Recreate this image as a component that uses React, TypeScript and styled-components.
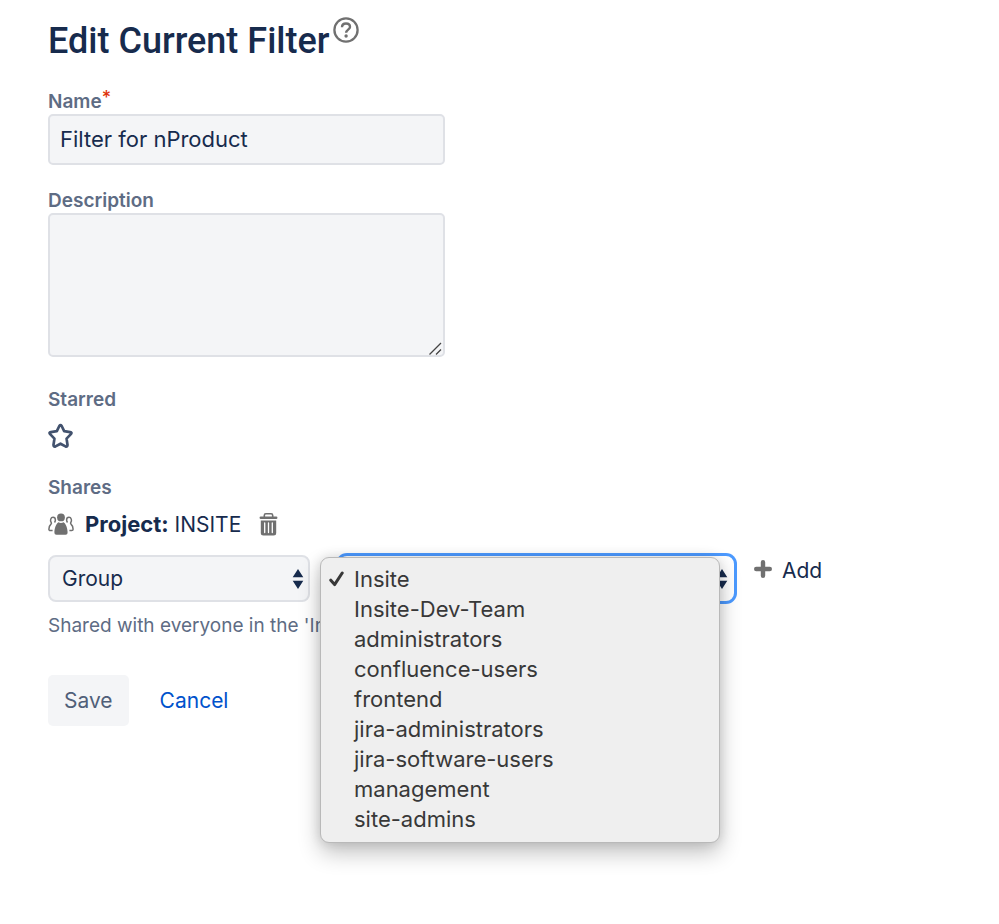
import React, { useState } from "react";
import styled, { createGlobalStyle } from "styled-components";

const GlobalStyle = createGlobalStyle`
  *, *::before, *::after { box-sizing: border-box; }
  body {
    margin: 0;
    background: #ffffff;
    color: #172b4d;
    font-family: Inter, "Liberation Sans", sans-serif;
    font-size: 21px;
    line-height: 30px;
  }
  button, input, select, textarea { font: inherit; color: inherit; margin: 0; }
`;

const Page = styled.main`
  min-height: 100vh;
  padding: 17px 48px 48px;
`;

const Header = styled.header`
  display: flex;
  align-items: flex-start;
  gap: 4px;
  margin-bottom: 25px;
`;

const Title = styled.h1`
  margin: 0;
  font-family: Roboto, Inter, sans-serif;
  font-size: 36px;
  line-height: 48px;
  font-weight: 500;
`;

const IconButton = styled.button`
  display: inline-flex;
  padding: 0;
  border: 0;
  background: none;
  cursor: pointer;
  color: ${(p) => p.color || "#707070"};
`;

const Form = styled.form`
  display: flex;
  flex-direction: column;
  align-items: flex-start;
`;

const Field = styled.div<{ $gap: number }>`
  display: flex;
  flex-direction: column;
  align-items: flex-start;
  width: 100%;
  margin-bottom: ${(p) => p.$gap}px;
`;

const Label = styled.label`
  display: flex;
  color: #5e6c84;
  font-size: 19px;
  line-height: 24px;
  font-weight: 600;
`;

const Required = styled.span`
  color: #de350b;
  font-size: 18px;
  line-height: 16px;
  font-weight: 500;
`;

const TextInput = styled.input`
  width: 100%;
  max-width: 397px;
  height: 51px;
  padding: 0 10px 1px;
  border: 2px solid #dfe1e6;
  border-radius: 5px;
  background: #f4f5f7;
  font-size: 22px;
  outline: none;
`;

const TextArea = styled.textarea`
  display: block;
  width: 100%;
  height: 144px;
  padding: 8px 10px;
  border: 2px solid #dfe1e6;
  border-radius: 5px;
  background: #f4f5f7;
  font-size: 22px;
  outline: none;
  resize: none;
`;

const TextAreaBox = styled.div`
  position: relative;
  width: 100%;
  max-width: 397px;
`;

const Grip = styled.svg`
  position: absolute;
  right: 3px;
  bottom: 2px;
`;

const StarButton = styled(IconButton)`
  margin-top: 11px;
`;

const ShareRow = styled.div`
  display: flex;
  align-items: center;
  height: 32px;
  margin: 8px 0 15px;
`;

const ShareText = styled.span`
  margin: 0 18px 0 11px;
`;

const Strong = styled.strong`
  font-size: 22px;
  font-weight: 700;
`;

const PickerRow = styled.div`
  display: flex;
  align-items: flex-start;
  width: 100%;
`;

const SelectBox = styled.div<{ $width: number }>`
  position: relative;
  width: ${(p) => p.$width}px;
`;

const Select = styled.select<{ $focused?: boolean }>`
  appearance: none;
  display: block;
  width: 100%;
  height: ${(p) => (p.$focused ? 45 : 47)}px;
  padding: 0 32px 0 12px;
  border: 2px solid ${(p) => (p.$focused ? "#ffffff" : "#dfe1e6")};
  border-radius: 8px;
  background: ${(p) => (p.$focused ? "#ffffff" : "#f4f5f7")};
  box-shadow: ${(p) => (p.$focused ? "0 0 0 3px #4c9aff" : "none")};
  outline: none;
`;

const Arrows = styled.svg`
  position: absolute;
  right: 6px;
  top: calc(50% - 11px);
  pointer-events: none;
`;

const GroupPicker = styled.div`
  position: relative;
  margin-left: 29px;
  padding-top: 1px;
`;

const Menu = styled.ul`
  position: absolute;
  z-index: 2;
  top: 2px;
  left: -19px;
  width: 400px;
  margin: 0;
  padding: 6px 0 8px;
  list-style: none;
  background: #efefef;
  border: 1px solid #b9b9b9;
  border-radius: 9px;
  box-shadow: 0 10px 22px rgba(0, 0, 0, 0.24), 0 0 12px rgba(0, 0, 0, 0.12);
  color: #383838;
  font-size: 22px;
`;

const MenuItem = styled.li`
  display: grid;
  grid-template-columns: 25px 1fr;
  align-items: center;
  height: 30px;
  padding-left: 8px;
  cursor: default;
`;

const MenuText = styled.span`
  grid-column: 2;
`;

const AddButton = styled.button`
  display: flex;
  align-items: center;
  gap: 10px;
  margin: 1px 0 0 20px;
  padding: 0;
  border: 0;
  background: none;
  cursor: pointer;
`;

const Plus = styled.svg`
  margin-bottom: 5px;
`;

const Help = styled.p`
  margin: 12px 0 37px;
  color: #5e6c84;
  font-size: 19px;
  line-height: 24px;
`;

const Actions = styled.div`
  display: flex;
  align-items: center;
  gap: 31px;
`;

const SaveButton = styled.button`
  height: 51px;
  padding: 0 16px;
  border: 0;
  border-radius: 5px;
  background: #f4f5f7;
  color: #505f79;
  cursor: pointer;
`;

const CancelLink = styled.a`
  color: #0052cc;
  text-decoration: none;
`;

const GROUPS = [
  "Insite",
  "Insite-Dev-Team",
  "administrators",
  "confluence-users",
  "frontend",
  "jira-administrators",
  "jira-software-users",
  "management",
  "site-admins",
];

const UpDown = () => (
  <Arrows width="12" height="22" viewBox="0 0 12 22" fill="#172b4d" aria-hidden="true">
    <path d="M6 1 11.300 9.300H.7ZM6 21 .7 12.700h10.600Z" />
  </Arrows>
);

export default function App() {
  const [name, setName] = useState("Filter for nProduct");
  const [starred, setStarred] = useState(false);
  const [group, setGroup] = useState("Insite");

  return (
    <>
      <GlobalStyle />
      <Page>
        <Header>
          <Title>Edit Current Filter</Title>
          <IconButton type="button" aria-label="Help">
            <svg width="26" height="26" viewBox="0 0 26 26" fill="none" stroke="currentColor">
              <circle cx="13" cy="13" r="11.6" strokeWidth="2.3" />
              <path d="M9 10.2C9 7.8 10.7 6.5 13 6.5s4 1.3 4 3.4c0 2.6-3.9 2.9-3.9 5.9" strokeWidth="2.4" />
              <circle cx="13.1" cy="19" r="1.7" fill="currentColor" stroke="none" />
            </svg>
          </IconButton>
        </Header>

        <Form onSubmit={(e) => e.preventDefault()}>
          <Field $gap={24}>
            <Label htmlFor="filter-name">
              Name<Required>*</Required>
            </Label>
            <TextInput id="filter-name" value={name} onChange={(e) => setName(e.target.value)} />
          </Field>

          <Field $gap={31}>
            <Label htmlFor="filter-description">Description</Label>
            <TextAreaBox>
              <TextArea id="filter-description" />
              <Grip width="13" height="13" viewBox="0 0 13 13" stroke="#444444" strokeWidth="1.3" aria-hidden="true">
                <path d="M.5 12.5 12 1M7 12.5 12 7.5" />
              </Grip>
            </TextAreaBox>
          </Field>

          <Field $gap={27}>
            <Label as="span">Starred</Label>
            <StarButton
              type="button"
              color="#42526e"
              aria-label="Starred"
              aria-pressed={starred}
              onClick={() => setStarred(!starred)}
            >
              <svg
                width="25"
                height="26"
                viewBox="0 0 26 27"
                fill={starred ? "currentColor" : "none"}
                stroke="currentColor"
                strokeWidth="2.8"
                strokeLinejoin="round"
              >
                <path d="M11.9 2.8Q13 1.3 14.1 2.8L16.8 8.5 23 9.4Q25.3 9.9 23.8 11.6L19.3 16.2 20.3 22.8Q20.2 25.1 18.2 24.3L13 21.5 7.8 24.3Q5.8 25.1 5.7 22.8L6.7 16.2 2.2 11.6Q.7 9.9 3 9.4L9.2 8.5Z" />
              </svg>
            </StarButton>
          </Field>

          <Label as="span">Shares</Label>
          <ShareRow>
            <svg width="26" height="22" viewBox="0 0 26 22" fill="#707070" aria-hidden="true">
              <circle cx="13" cy="4.4" r="3.9" />
              <path d="M10.4 9.3c1.6.9 3.6.9 5.2 0 2.500 1.700 4 6.500 4 10 0 1.700-.7 2.500-2.100 2.500h-9c-1.400 0-2.100-.8-2.100-2.500 0-3.500 1.500-8.300 4-10Z" />
              <g fill="none" stroke="#707070" strokeWidth="1.5">
                <path d="M4.600 17.600H2.300c-.9 0-1.400-.5-1.400-1.300 0-2.100.7-4 2.100-5.200.8-.7.6-1.100.1-1.800-1.200-1.700-.4-5.100 1.900-5.100 1.500 0 2.400 1.100 2.400 2.700 0 1-.4 1.900-.9 2.600" />
                <path d="M21.400 17.600h2.300c.9 0 1.400-.5 1.400-1.300 0-2.100-.7-4-2.100-5.200-.8-.7-.6-1.100-.1-1.800 1.200-1.700.4-5.100-1.900-5.100-1.500 0-2.400 1.100-2.400 2.700 0 1 .4 1.900.9 2.600" />
              </g>
            </svg>
            <ShareText>
              <Strong>Project:</Strong> INSITE
            </ShareText>
            <IconButton type="button" aria-label="Delete share">
              <svg width="19" height="23" viewBox="0 0 19 23">
                <path d="M5.3 4V2.4Q5.3.8 6.9.8h5.2q1.6 0 1.6 1.6V4" fill="none" stroke="currentColor" strokeWidth="1.6" />
                <rect x=".6" y="3.4" width="17.8" height="2.6" rx="1.1" fill="currentColor" />
                <path d="M1.8 7.4h15.4V20q0 2.5-2.6 2.5H4.4Q1.8 22.5 1.8 20Z" fill="currentColor" />
                <path d="M5.700 10v9.600M9.500 10v9.600M13.300 10v9.600" stroke="#ffffff" strokeWidth="1.3" strokeLinecap="round" />
              </svg>
            </IconButton>
          </ShareRow>

          <PickerRow>
            <SelectBox $width={262}>
              <Select aria-label="Share type" defaultValue="Group">
                <option>Group</option>
                <option>Project</option>
              </Select>
              <UpDown />
            </SelectBox>
            <GroupPicker>
              <SelectBox $width={395}>
                <Select $focused aria-label="Group" value={group} onChange={(e) => setGroup(e.target.value)}>
                  {GROUPS.map((g) => (
                    <option key={g}>{g}</option>
                  ))}
                </Select>
                <UpDown />
              </SelectBox>
              <Menu role="listbox" aria-label="Groups">
                {GROUPS.map((g) => (
                  <MenuItem key={g} role="option" aria-selected={g === group} onClick={() => setGroup(g)}>
                    {g === group && (
                      <svg width="16" height="18" viewBox="0 0 16 18" fill="none" stroke="#383838" strokeWidth="3" strokeLinecap="round" strokeLinejoin="round" aria-hidden="true">
                        <path d="M1.8 10.2 5.6 14.6 13.2 3" />
                      </svg>
                    )}
                    <MenuText>{g}</MenuText>
                  </MenuItem>
                ))}
              </Menu>
            </GroupPicker>
            <AddButton type="button">
              <Plus width="18" height="18" viewBox="0 0 18 18" stroke="#707070" strokeWidth="4.4" strokeLinecap="round" aria-hidden="true">
                <path d="M9 2.2v13.6M2.2 9h13.6" />
              </Plus>
              Add
            </AddButton>
          </PickerRow>

          <Help>Shared with everyone in the 'Insite' group.</Help>

          <Actions>
            <SaveButton type="submit">Save</SaveButton>
            <CancelLink href="#cancel">Cancel</CancelLink>
          </Actions>
        </Form>
      </Page>
    </>
  );
}
